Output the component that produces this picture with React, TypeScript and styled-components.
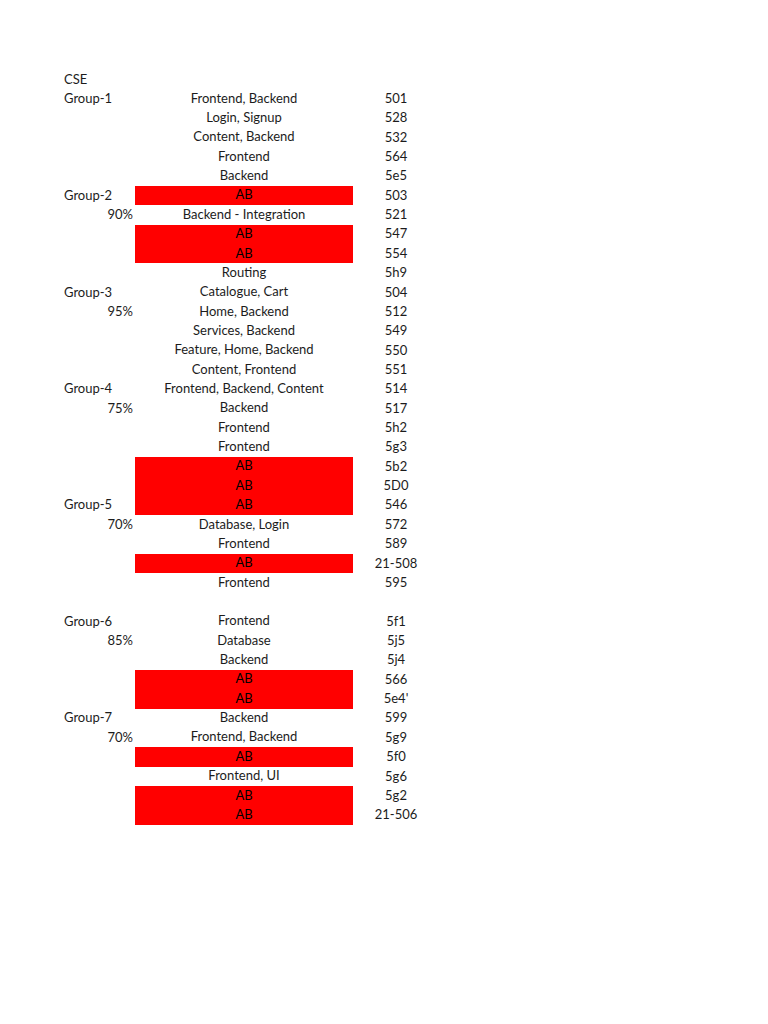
import { createGlobalStyle } from "styled-components";
import styled from "styled-components";

const GlobalStyle = createGlobalStyle`
    html, body {
        margin: 0;
        padding: 0;
        background: #ffffff;
    }
    body {
        font-family: Lato, "Open Sans", "Liberation Sans", sans-serif;
        font-size: 13px;
        color: #1c1c1c;
    }
`;

interface RowI {
    label?: string;
    pct?: string;
    topic?: string;
    code?: string;
    absent?: boolean;
}

const rows: RowI[] = [
    { label: "CSE" },
    { label: "Group-1", topic: "Frontend, Backend", code: "501" },
    { topic: "Login, Signup", code: "528" },
    { topic: "Content, Backend", code: "532" },
    { topic: "Frontend", code: "564" },
    { topic: "Backend", code: "5e5" },
    { label: "Group-2", topic: "AB", code: "503", absent: true },
    { pct: "90%", topic: "Backend - Integration", code: "521" },
    { topic: "AB", code: "547", absent: true },
    { topic: "AB", code: "554", absent: true },
    { topic: "Routing", code: "5h9" },
    { label: "Group-3", topic: "Catalogue, Cart", code: "504" },
    { pct: "95%", topic: "Home, Backend", code: "512" },
    { topic: "Services, Backend", code: "549" },
    { topic: "Feature, Home, Backend", code: "550" },
    { topic: "Content, Frontend", code: "551" },
    { label: "Group-4", topic: "Frontend, Backend, Content", code: "514" },
    { pct: "75%", topic: "Backend", code: "517" },
    { topic: "Frontend", code: "5h2" },
    { topic: "Frontend", code: "5g3" },
    { topic: "AB", code: "5b2", absent: true },
    { topic: "AB", code: "5D0", absent: true },
    { label: "Group-5", topic: "AB", code: "546", absent: true },
    { pct: "70%", topic: "Database, Login", code: "572" },
    { topic: "Frontend", code: "589" },
    { topic: "AB", code: "21-508", absent: true },
    { topic: "Frontend", code: "595" },
    {},
    { label: "Group-6", topic: "Frontend", code: "5f1" },
    { pct: "85%", topic: "Database", code: "5j5" },
    { topic: "Backend", code: "5j4" },
    { topic: "AB", code: "566", absent: true },
    { topic: "AB", code: "5e4'", absent: true },
    { label: "Group-7", topic: "Backend", code: "599" },
    { pct: "70%", topic: "Frontend, Backend", code: "5g9" },
    { topic: "AB", code: "5f0", absent: true },
    { topic: "Frontend, UI", code: "5g6" },
    { topic: "AB", code: "5g2", absent: true },
    { topic: "AB", code: "21-506", absent: true },
];

const Sheet = styled.div`
    padding: 69.8px 0 0 62px;
    display: flex;
    flex-direction: column;
`;

const Row = styled.div`
    display: grid;
    grid-template-columns: 73px 218px 86px;
    height: 19.36px;
`;

const Cell = styled.div<{ $align: "left" | "center" | "right"; $lift?: number }>`
    display: flex;
    align-items: flex-end;
    justify-content: ${({ $align }) =>
        $align === "left" ? "flex-start" : $align === "right" ? "flex-end" : "center"};
    padding: 0 2px ${({ $lift }) => 2 + ($lift ?? 0)}px 2px;
    line-height: 1.2;
    white-space: nowrap;
    box-sizing: border-box;
`;

const TopicCell = styled(Cell)<{ $absent?: boolean }>`
    background-color: ${({ $absent }) => ($absent ? "#ff0000" : "transparent")};
    color: ${({ $absent }) => ($absent ? "#000000" : "inherit")};
`;

const App = () => {
    return (
        <>
            <GlobalStyle />
            <Sheet>
                {rows.map((r, i) => (
                    <Row key={i}>
                        <Cell $align={r.pct ? "right" : "left"}>{r.label ?? r.pct ?? ""}</Cell>
                        <TopicCell $align="center" $lift={0.3} $absent={r.absent}>
                            {r.topic ?? ""}
                        </TopicCell>
                        <Cell $align="center">{r.code ?? ""}</Cell>
                    </Row>
                ))}
            </Sheet>
        </>
    );
};

export default App;
